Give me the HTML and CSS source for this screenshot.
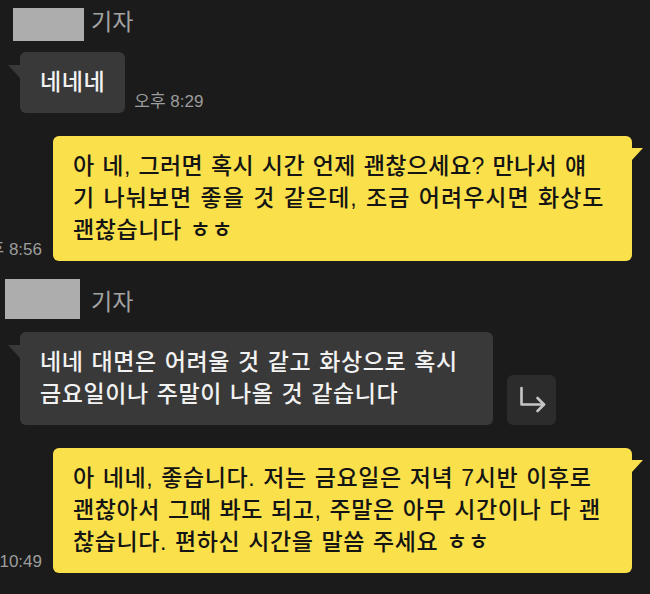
FILE: index.html
```html
<!DOCTYPE html>
<html lang="ko">
<head>
<meta charset="utf-8">
<title>Chat</title>
<link rel="stylesheet" href="styles.css">
</head>
<body>
<main class="chat">
  <section class="group">
    <div class="sender"><span class="redact redact-a"></span><span class="role">기자</span></div>
    <div class="row other">
      <div class="bubble dark">네네네</div>
      <span class="time">오후 8:29</span>
    </div>
  </section>

  <div class="row me">
    <span class="time">오후 8:56</span>
    <div class="bubble yellow wide"><span class="fit-tight">아 네, 그러면 혹시 시간 언제 괜찮으세요? 만나서 얘</span><br><span class="fit-loose">기 나눠보면 좋을 것 같은데, 조금 어려우시면 화상도</span><br>괜찮습니다 ㅎㅎ</div>
  </div>

  <section class="group second">
    <div class="sender"><span class="redact redact-b"></span><span class="role">기자</span></div>
    <div class="row other">
      <div class="bubble dark medium">네네 대면은 어려울 것 같고 화상으로 혹시<br>금요일이나 주말이 나올 것 같습니다</div>
      <button class="share" type="button" aria-label="공유">
        <svg width="49" height="50" viewBox="0 0 49 50" fill="none" stroke="#c6c6c6" stroke-width="2.6" stroke-linecap="round" stroke-linejoin="round">
          <path d="M14.5 13 V29.5 H37"/>
          <path d="M30.5 23 L37 29.5 L30.5 36"/>
        </svg>
      </button>
    </div>
  </section>

  <div class="row me">
    <span class="time">오후 10:49</span>
    <div class="bubble yellow wide">아 네네, 좋습니다. 저는 금요일은 저녁 7시반 이후로<br>괜찮아서 그때 봐도 되고, 주말은 아무 시간이나 다 괜<br>찮습니다. 편하신 시간을 말씀 주세요 ㅎㅎ</div>
  </div>
</main>
</body>
</html>
```

FILE: styles.css
```css
html, body {
  margin: 0;
  padding: 0;
  background: #1b1b1b;
}

body {
  width: 650px;
  height: 594px;
  overflow: hidden;
  font-family: "Liberation Sans", "Noto Sans CJK KR", sans-serif;
}

.chat {
  display: flex;
  flex-direction: column;
  padding-top: 6px;
}

.group {
  display: flex;
  flex-direction: column;
}

.group.second {
  margin-top: 25px;
}

.sender {
  position: relative;
  padding-left: 91px;
  height: 32px;
  line-height: 32px;
  font-size: 23px;
  color: #a3a3a3;
  margin-bottom: 14px;
}

.redact {
  position: absolute;
  background: #adadad;
}

.redact-a {
  left: 13px;
  top: 2px;
  width: 71px;
  height: 33px;
}

.redact-b {
  left: 5px;
  top: -7px;
  width: 75px;
  height: 40px;
}

.row {
  display: flex;
  align-items: flex-end;
}

.row.other {
  padding-left: 20px;
}

.row.me {
  justify-content: flex-end;
  padding-right: 18px;
  margin-top: 23px;
}

.bubble {
  position: relative;
  flex-shrink: 0;
  box-sizing: border-box;
  border-radius: 6px;
  padding: 14px 20px 15px;
  font-size: 23px;
  font-weight: 500;
  line-height: 32px;
  letter-spacing: 0.6px;
  word-spacing: 1px;
  white-space: nowrap;
}

.fit-tight {
  letter-spacing: 0.4px;
}

.fit-loose {
  letter-spacing: 1px;
}

.bubble.dark {
  background: #393939;
  color: #f2f2f2;
}

.bubble.dark::before {
  content: "";
  position: absolute;
  left: -12px;
  top: 13px;
  width: 12px;
  height: 13px;
  background: #393939;
  clip-path: polygon(0 0, 100% 0, 100% 100%);
}

.bubble.medium {
  width: 473px;
}

.bubble.yellow {
  background: #fae14c;
  color: #141414;
}

.bubble.yellow::after {
  content: "";
  position: absolute;
  right: -11px;
  top: 12px;
  width: 11px;
  height: 12px;
  background: #fae14c;
  clip-path: polygon(0 0, 100% 0, 0 100%);
}

.bubble.wide {
  width: 579px;
}

.time {
  flex-shrink: 0;
  font-size: 17px;
  line-height: 18px;
  color: #9d9d9d;
  white-space: nowrap;
  margin-bottom: 2px;
}

.other .time {
  margin-left: 9px;
}

.me .time {
  margin-right: 11px;
}

.share {
  flex-shrink: 0;
  width: 49px;
  height: 50px;
  margin-left: 14px;
  padding: 0;
  border: 0;
  border-radius: 6px;
  background: #2c2c2c;
  display: flex;
  align-items: center;
  justify-content: center;
}

.share svg {
  display: block;
}
```
